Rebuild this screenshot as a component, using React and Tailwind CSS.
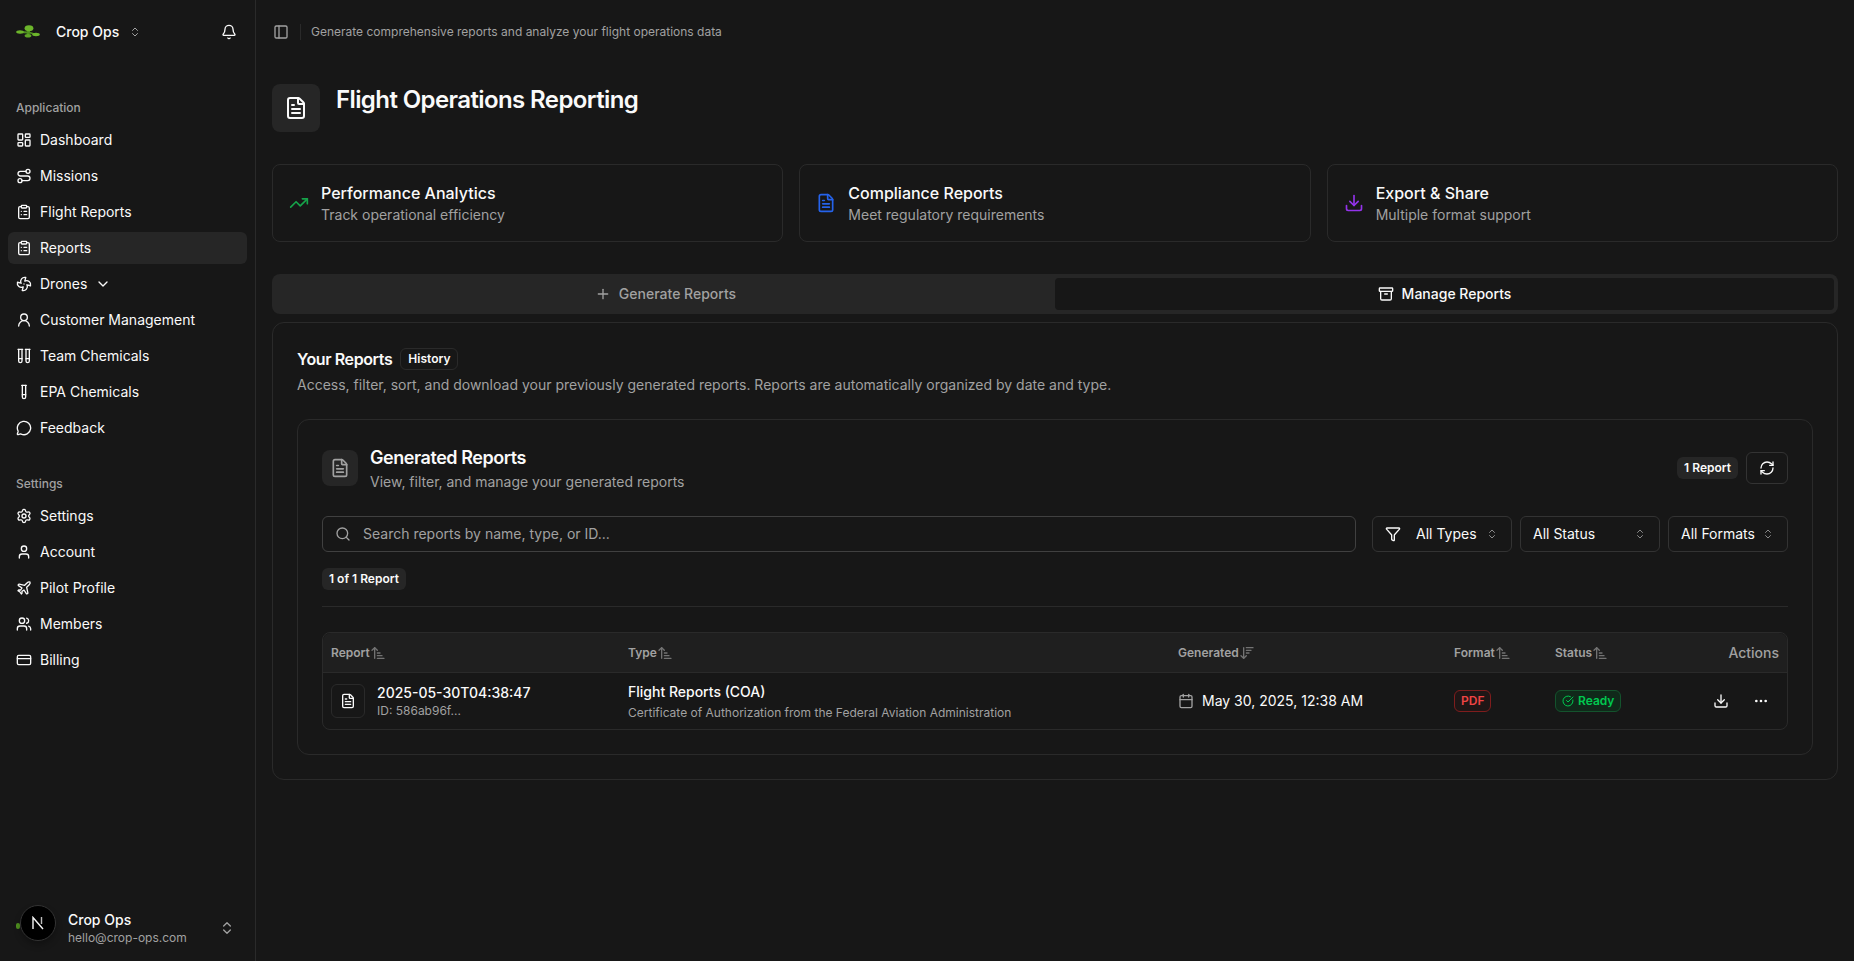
import {
  LayoutDashboard, Route, ClipboardList, Fan, UserRound, TestTubes, TestTube, MessageCircle,
  Settings, User, Plane, Users, CreditCard, ChevronsUpDown, ChevronDown, Bell, PanelLeft,
  FileText, TrendingUp, Download, Plus, Archive, RefreshCw, Funnel, Search, Calendar,
  Ellipsis, CircleCheckBig, ArrowUpNarrowWide, ArrowDownWideNarrow,
} from 'lucide-react';

const appItems = [
  { label: 'Dashboard', icon: LayoutDashboard },
  { label: 'Missions', icon: Route },
  { label: 'Flight Reports', icon: ClipboardList },
  { label: 'Reports', icon: ClipboardList, active: true },
  { label: 'Drones', icon: Fan, caret: true },
  { label: 'Customer Management', icon: UserRound },
  { label: 'Team Chemicals', icon: TestTubes },
  { label: 'EPA Chemicals', icon: TestTube },
  { label: 'Feedback', icon: MessageCircle },
];

const settingsItems = [
  { label: 'Settings', icon: Settings },
  { label: 'Account', icon: User },
  { label: 'Pilot Profile', icon: Plane },
  { label: 'Members', icon: Users },
  { label: 'Billing', icon: CreditCard },
];

const highlights = [
  { title: 'Performance Analytics', text: 'Track operational efficiency', icon: TrendingUp, color: 'text-[#16a34a]' },
  { title: 'Compliance Reports', text: 'Meet regulatory requirements', icon: FileText, color: 'text-[#2563eb]' },
  { title: 'Export & Share', text: 'Multiple format support', icon: Download, color: 'text-[#9333ea]' },
];

const CropLogo = () => (
  <svg width="24" height="14" viewBox="0 0 24 14" fill="none">
    <path d="M3 7 L13 7.5 L21 10" stroke="#4f8f1f" strokeWidth="1.8" />
    <path d="M13 3 L12 10" stroke="#4f8f1f" strokeWidth="3" />
    <ellipse cx="13" cy="3.2" rx="4.4" ry="3" fill="#6cb52b" />
    <ellipse cx="12" cy="10.8" rx="3.4" ry="1.8" fill="#5fa526" />
    <ellipse cx="4" cy="7" rx="3.8" ry="1.7" fill="#6cb52b" />
    <ellipse cx="20" cy="9.5" rx="3.8" ry="1.7" fill="#6cb52b" />
  </svg>
);

const NavItem = ({ item }) => {
  const Icon = item.icon;
  return (
    <a className={`flex h-8 items-center gap-2 rounded-md px-2 text-sm text-[#fafafa] ${item.active ? 'bg-[#262626]' : ''}`}>
      <Icon className="size-4 shrink-0" />
      <span>{item.label}</span>
      {item.caret && <ChevronDown className="size-4" />}
    </a>
  );
};

const NavGroup = ({ label, items }) => (
  <div className="p-2">
    <div className="flex h-8 items-center px-2 text-xs font-medium text-[#a1a1a1]">{label}</div>
    <div className="flex flex-col gap-1">
      {items.map((item) => <NavItem key={item.label} item={item} />)}
    </div>
  </div>
);

const Sidebar = () => (
  <aside className="flex h-screen w-64 shrink-0 flex-col border-r border-[#2a2a2a]">
    <div className="flex h-16 shrink-0 items-center justify-between pl-4 pr-[18px]">
      <div className="flex items-center">
        <CropLogo />
        <span className="ml-4 text-sm font-medium text-[#fafafa]">Crop Ops</span>
        <ChevronsUpDown className="ml-[10px] size-3 text-[#a1a1a1]" />
      </div>
      <Bell className="size-4 text-[#fafafa]" />
    </div>
    <div className="mt-5 flex flex-col gap-2">
      <NavGroup label="Application" items={appItems} />
      <NavGroup label="Settings" items={settingsItems} />
    </div>
    <div className="relative mt-auto px-2 pb-[9px]">
      <span className="absolute left-[16px] top-[19px] h-[6px] w-[4px] rounded-full bg-[#4f8f1f]" />
      <div className="flex h-12 items-center gap-3 px-3">
        <div className="relative mb-[10px] flex size-9 shrink-0 items-center justify-center rounded-full border border-[#333] bg-black shadow-[0_4px_6px_rgba(0,0,0,0.25)]">
          <svg width="14" height="14" viewBox="0 0 14 14" fill="none">
            <path d="M2 13 V1.5 L12 13" stroke="#f5f5f5" strokeWidth="1.4" />
            <path d="M10.5 1 V8" stroke="#bdbdbd" strokeWidth="1.4" />
          </svg>
        </div>
        <div className="flex min-w-0 flex-1 flex-col">
          <span className="text-sm font-medium leading-5 text-[#fafafa]">Crop Ops</span>
          <span className="text-xs leading-4 text-[#a1a1a1]">hello@crop-ops.com</span>
        </div>
        <ChevronsUpDown className="size-4 text-[#a1a1a1]" />
      </div>
    </div>
  </aside>
);

const Pill = ({ children }) => (
  <span className="inline-flex h-[22px] items-center rounded-md bg-[#262626] px-[7px] text-xs font-semibold text-[#fafafa]">{children}</span>
);

const SelectBox = ({ label, width, icon: Icon }) => (
  <button className={`flex h-9 items-center justify-between rounded-md border border-[#333] pl-3 pr-[13px] text-sm text-[#fafafa] ${width}`}>
    <span className="flex items-center gap-[15px]">
      {Icon && <Icon className="size-4" />}
      {label}
    </span>
    <ChevronsUpDown className="size-3 text-[#8a8a8a]" />
  </button>
);

const SortHead = ({ label, icon: Icon = ArrowUpNarrowWide }) => (
  <div className="flex items-center px-2 text-xs font-semibold text-[#a1a1a1]">
    {label}
    <Icon className="size-4 text-[#737373]" />
  </div>
);

const ReportsTable = () => (
  <div className="mt-[25px] rounded-lg border border-[#2a2a2a]">
    <div className="grid h-10 grid-cols-[297px_550px_276px_101px_1fr_auto] rounded-t-lg border-b border-[#2a2a2a] bg-[#1f1f1f]">
      <SortHead label="Report" />
      <SortHead label="Type" />
      <SortHead label="Generated" icon={ArrowDownWideNarrow} />
      <SortHead label="Format" />
      <SortHead label="Status" />
      <div className="flex items-center px-2 text-sm font-medium text-[#a1a1a1]">Actions</div>
    </div>
    <div className="grid h-14 grid-cols-[297px_550px_276px_101px_1fr_auto]">
      <div className="flex items-center gap-3 px-2">
        <div className="flex h-[34px] w-[34px] items-center justify-center rounded-md border border-[#2a2a2a]">
          <FileText className="size-4 text-[#fafafa]" />
        </div>
        <div className="flex flex-col">
          <span className="text-sm font-medium leading-5 text-[#fafafa]">2025-05-30T04:38:47</span>
          <span className="text-xs leading-4 text-[#a1a1a1]">ID: 586ab96f...</span>
        </div>
      </div>
      <div className="flex flex-col justify-center px-2">
        <span className="text-sm font-medium leading-5 text-[#fafafa]">Flight Reports (COA)</span>
        <span className="mt-[3px] text-xs leading-4 text-[#a1a1a1]">Certificate of Authorization from the Federal Aviation Administration</span>
      </div>
      <div className="flex items-center gap-2 px-2 text-sm text-[#fafafa]">
        <Calendar className="size-4 text-[#a1a1a1]" />
        May 30, 2025, 12:38 AM
      </div>
      <div className="flex items-center px-2">
        <span className="inline-flex h-[22px] items-center rounded-md border border-[#7f1d1d] bg-[#1f1616] px-[6px] text-xs font-semibold text-[#ef4444]">PDF</span>
      </div>
      <div className="flex items-center px-2">
        <span className="inline-flex h-[22px] items-center gap-1 rounded-md border border-[#14532d] bg-[#10291a] px-[6px] text-xs font-semibold text-[#00c950]">
          <CircleCheckBig className="size-3" />
          Ready
        </span>
      </div>
      <div className="flex items-center gap-2 pr-[10px] text-[#fafafa]">
        <button className="flex size-8 items-center justify-center"><Download className="size-4" /></button>
        <button className="flex size-8 items-center justify-center"><Ellipsis className="size-4" /></button>
      </div>
    </div>
  </div>
);

const GeneratedReports = () => (
  <div className="mt-6 rounded-xl border border-[#2a2a2a] p-6">
    <div className="flex items-center justify-between">
      <div className="flex items-center gap-3">
        <div className="flex size-9 items-center justify-center rounded-lg bg-[#262626]">
          <FileText className="size-5 text-[#a1a1a1]" />
        </div>
        <div className="flex flex-col">
          <h3 className="text-lg font-semibold leading-7 tracking-tight text-[#fafafa]">Generated Reports</h3>
          <p className="text-sm leading-5 text-[#a1a1a1]">View, filter, and manage your generated reports</p>
        </div>
      </div>
      <div className="flex items-center gap-2">
        <Pill>1 Report</Pill>
        <button className="flex h-8 w-[42px] items-center justify-center rounded-md border border-[#333] text-[#fafafa]">
          <RefreshCw className="size-4" />
        </button>
      </div>
    </div>
    <div className="mt-6 flex items-center gap-4">
      <div className="flex h-9 flex-1 items-center gap-3 rounded-md border border-[#404040] px-3 text-sm text-[#a1a1a1]">
        <Search className="size-4 shrink-0" />
        Search reports by name, type, or ID...
      </div>
      <div className="flex gap-2">
        <SelectBox label="All Types" width="w-[140px]" icon={Funnel} />
        <SelectBox label="All Status" width="w-[140px]" />
        <SelectBox label="All Formats" width="w-[120px]" />
      </div>
    </div>
    <div className="mt-4 flex border-b border-[#2a2a2a] pb-4">
      <Pill>1 of 1 Report</Pill>
    </div>
    <ReportsTable />
  </div>
);

export default function App() {
  return (
    <div className="flex min-h-screen bg-[#171717] font-[family-name:Inter,sans-serif] text-[#fafafa]">
      <Sidebar />
      <main className="min-w-0 flex-1">
        <header className="flex h-16 items-center pl-[17px]">
          <PanelLeft className="size-4 text-[#a1a1a1]" />
          <span className="ml-[11px] h-4 w-px bg-[#2a2a2a]" />
          <span className="ml-[10px] text-xs text-[#a1a1a1]">Generate comprehensive reports and analyze your flight operations data</span>
        </header>
        <div className="px-4 pt-5">
          <div className="flex items-start gap-4">
            <div className="flex size-12 items-center justify-center rounded-lg bg-[#262626]">
              <FileText className="size-6 text-[#fafafa]" />
            </div>
            <h1 className="text-2xl font-semibold leading-8 tracking-tight text-[#fafafa]">Flight Operations Reporting</h1>
          </div>
          <div className="mt-8 grid grid-cols-3 gap-4">
            {highlights.map((h) => {
              const Icon = h.icon;
              return (
                <div key={h.title} className="flex items-center gap-3 rounded-lg border border-[#2a2a2a] px-4 py-4">
                  <Icon className={`size-5 shrink-0 ${h.color}`} />
                  <div className="flex flex-col">
                    <span className="text-base font-medium leading-6 text-[#fafafa]">{h.title}</span>
                    <span className="text-sm leading-5 text-[#a1a1a1]">{h.text}</span>
                  </div>
                </div>
              );
            })}
          </div>
          <div className="mt-8 grid h-10 grid-cols-2 rounded-lg bg-[#262626] p-1">
            <button className="flex items-center justify-center gap-2 text-sm font-medium text-[#a1a1a1]">
              <Plus className="size-4" />
              Generate Reports
            </button>
            <button className="flex items-center justify-center gap-2 rounded-sm bg-[#171717] text-sm font-medium text-[#fafafa]">
              <Archive className="size-4" />
              Manage Reports
            </button>
          </div>
          <section className="mt-2 rounded-xl border border-[#2a2a2a] p-6">
            <div className="flex items-center gap-2">
              <h2 className="text-base font-semibold leading-6 tracking-tight text-[#fafafa]">Your Reports</h2>
              <span className="inline-flex h-[22px] items-center rounded-md border border-[#2a2a2a] px-[7px] text-xs font-semibold text-[#fafafa]">History</span>
            </div>
            <p className="mt-1 text-sm leading-5 text-[#a1a1a1]">Access, filter, sort, and download your previously generated reports. Reports are automatically organized by date and type.</p>
            <GeneratedReports />
          </section>
        </div>
      </main>
    </div>
  );
}
